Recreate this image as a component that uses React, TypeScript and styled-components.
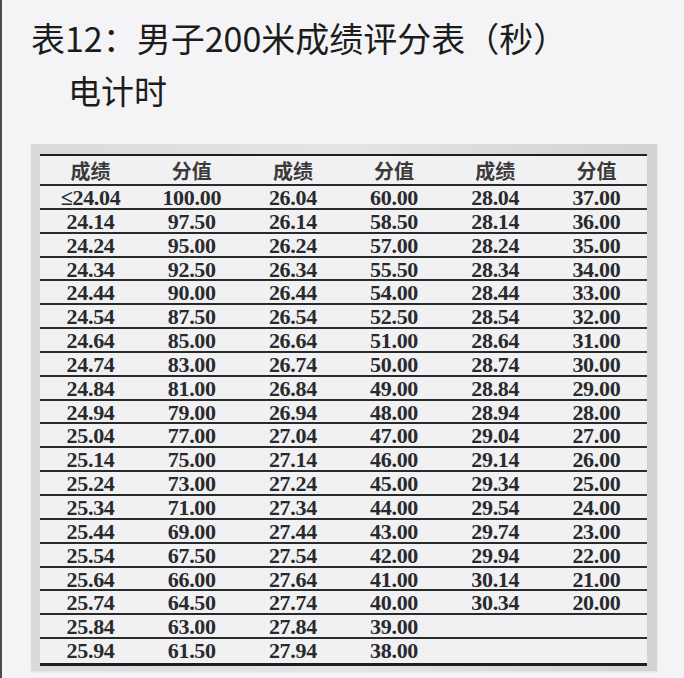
import React from "react";
import styled, { createGlobalStyle } from "styled-components";

const GlobalStyle = createGlobalStyle`
  html, body {
    margin: 0;
    padding: 0;
    background: #f4f4f6;
  }
`;

const Page = styled.div`
  box-sizing: border-box;
  width: 684px;
  height: 678px;
  overflow: hidden;
  border-left: 2px solid #4a4a4c;
  background: #f4f4f6;
  padding: 15px 0 0 29px;
  font-family: "Noto Sans CJK SC", "Noto Sans", sans-serif;
  color: #1c1c1c;
`;

const Title = styled.h1`
  margin: 0;
  font-size: 34px;
  font-weight: 400;
  line-height: 46px;
  letter-spacing: 0;
  white-space: nowrap;
`;

const Subtitle = styled.h2`
  margin: 7px 0 0 37px;
  font-size: 33px;
  font-weight: 400;
  line-height: 44px;
`;

const Panel = styled.div`
  box-sizing: border-box;
  margin-top: 32px;
  width: 626px;
  padding: 10px 9px 5px 9px;
  background: linear-gradient(to right, #dadadc 0%, #e4e4e6 50%, #d2d2d4 100%);
  box-shadow: 0 1px 2px rgba(0, 0, 0, 0.08);
`;

const Table = styled.div`
  border-top: 2px solid #1e1e1e;
  border-bottom: 3px solid #1e1e1e;
  background: #f1f1f3;
  margin-right: 1px;
`;

const Row = styled.div<{ $header?: boolean; $last?: boolean }>`
  box-sizing: border-box;
  display: grid;
  grid-template-columns: repeat(6, 1fr);
  align-items: center;
  height: ${(p) => (p.$header ? "30px" : "23.85px")};
  border-bottom: ${(p) => (p.$last ? "none" : "2px solid #2a2a2a")};
`;

const HeadCell = styled.div`
  text-align: center;
  font-family: "Noto Sans CJK SC", "Noto Sans", sans-serif;
  font-size: 20px;
  font-weight: 700;
  color: #3a3a3a;
  line-height: 1;
  padding-top: 2px;
`;

const Cell = styled.div`
  text-align: center;
  font-family: "Liberation Serif", "Times New Roman", serif;
  font-size: 22px;
  font-weight: 700;
  letter-spacing: -0.3px;
  color: #2a2a2c;
  line-height: 1;
  padding-top: 1px;
`;

const data: [string, string, string, string, string, string][] = [
  ["≤24.04", "100.00", "26.04", "60.00", "28.04", "37.00"],
  ["24.14", "97.50", "26.14", "58.50", "28.14", "36.00"],
  ["24.24", "95.00", "26.24", "57.00", "28.24", "35.00"],
  ["24.34", "92.50", "26.34", "55.50", "28.34", "34.00"],
  ["24.44", "90.00", "26.44", "54.00", "28.44", "33.00"],
  ["24.54", "87.50", "26.54", "52.50", "28.54", "32.00"],
  ["24.64", "85.00", "26.64", "51.00", "28.64", "31.00"],
  ["24.74", "83.00", "26.74", "50.00", "28.74", "30.00"],
  ["24.84", "81.00", "26.84", "49.00", "28.84", "29.00"],
  ["24.94", "79.00", "26.94", "48.00", "28.94", "28.00"],
  ["25.04", "77.00", "27.04", "47.00", "29.04", "27.00"],
  ["25.14", "75.00", "27.14", "46.00", "29.14", "26.00"],
  ["25.24", "73.00", "27.24", "45.00", "29.34", "25.00"],
  ["25.34", "71.00", "27.34", "44.00", "29.54", "24.00"],
  ["25.44", "69.00", "27.44", "43.00", "29.74", "23.00"],
  ["25.54", "67.50", "27.54", "42.00", "29.94", "22.00"],
  ["25.64", "66.00", "27.64", "41.00", "30.14", "21.00"],
  ["25.74", "64.50", "27.74", "40.00", "30.34", "20.00"],
  ["25.84", "63.00", "27.84", "39.00", "", ""],
  ["25.94", "61.50", "27.94", "38.00", "", ""],
];

const headers = ["成绩", "分值", "成绩", "分值", "成绩", "分值"];

export default function App() {
  return (
    <>
      <GlobalStyle />
      <Page>
        <Title>表12：男子200米成绩评分表（秒）</Title>
        <Subtitle>电计时</Subtitle>
        <Panel>
          <Table>
            <Row $header>
              {headers.map((h, i) => (
                <HeadCell key={i}>{h}</HeadCell>
              ))}
            </Row>
            {data.map((r, i) => (
              <Row key={i} $last={i === data.length - 1}>
                {r.map((c, j) => (
                  <Cell key={j}>{c}</Cell>
                ))}
              </Row>
            ))}
          </Table>
        </Panel>
      </Page>
    </>
  );
}
